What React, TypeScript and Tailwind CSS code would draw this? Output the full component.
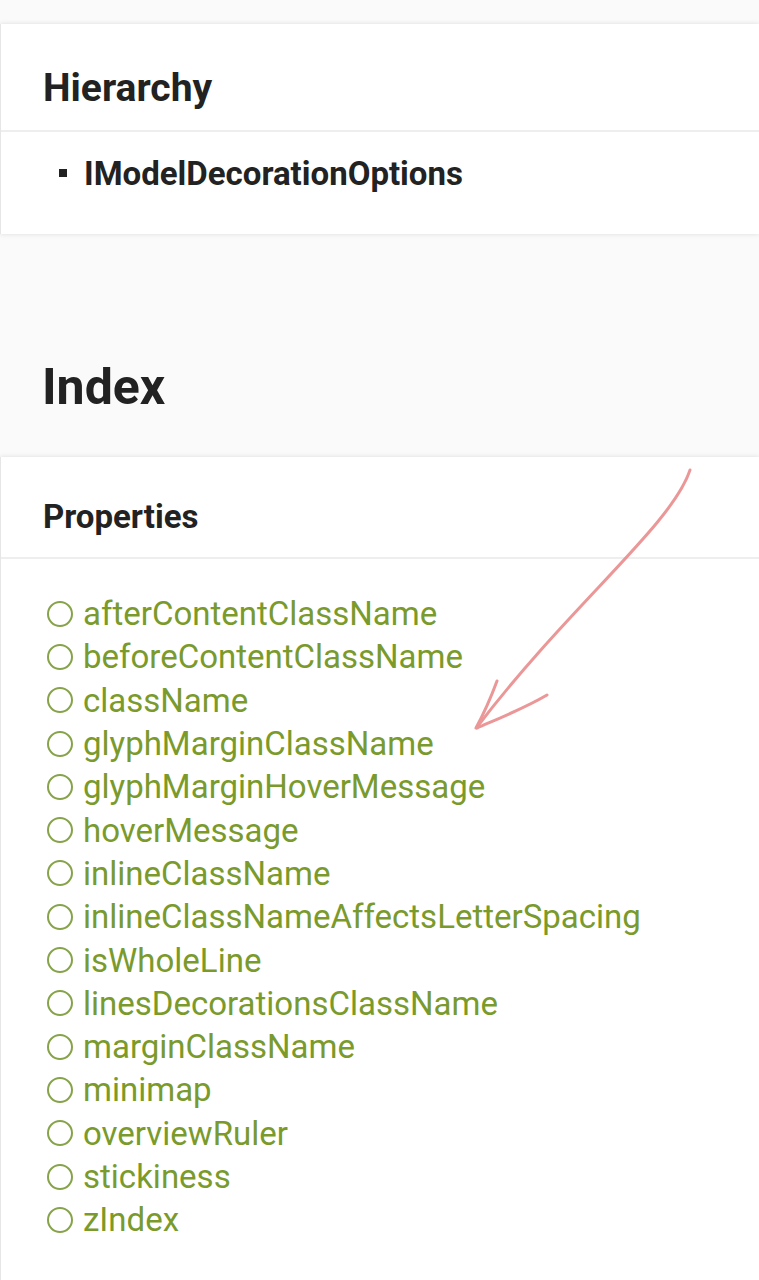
import React from "react";

const props = [
  "afterContentClassName",
  "beforeContentClassName",
  "className",
  "glyphMarginClassName",
  "glyphMarginHoverMessage",
  "hoverMessage",
  "inlineClassName",
  "inlineClassNameAffectsLetterSpacing",
  "isWholeLine",
  "linesDecorationsClassName",
  "marginClassName",
  "minimap",
  "overviewRuler",
  "stickiness",
  "zIndex",
];

export default function App() {
  return (
    <div
      className="relative min-h-[1280px] w-[759px] overflow-hidden bg-[#fafafa] pt-[24px] text-[#222]"
      style={{ fontFamily: "Roboto, 'Noto Sans', sans-serif" }}
    >
      <section className="border-l border-[#e6e6e6] bg-white shadow-[0_0_5px_rgba(0,0,0,0.12)]">
        <div className="flex h-[108px] items-center border-b-2 border-[#eeeeee] pl-[42px] pt-[22px]">
          <h2 className="text-[39px] font-bold leading-none">Hierarchy</h2>
        </div>
        <div className="flex h-[102px] items-center pb-[20px] pl-[58px]">
          <span className="mr-[17px] h-[8px] w-[8px] bg-[#222]" />
          <span className="text-[33px] font-bold leading-none">IModelDecorationOptions</span>
        </div>
      </section>

      <div className="flex h-[222px] items-end pb-[44px] pl-[42px]">
        <h2 className="text-[50px] font-bold leading-none">Index</h2>
      </div>

      <section className="mt-[1px] border-l border-[#e6e6e6] bg-white shadow-[0_0_5px_rgba(0,0,0,0.12)]">
        <div className="flex h-[102px] items-center border-b-2 border-[#eeeeee] pl-[42px] pt-[18px]">
          <h3 className="text-[33px] font-bold leading-none">Properties</h3>
        </div>
        <ul className="flex flex-col pb-[40px] pl-[46px] pt-[33px]">
          {props.map((p) => (
            <li key={p} className="flex h-[43.3px] items-center text-[33px] leading-none text-[#7a9a2c]">
              <span className="mr-[10px] h-[26px] w-[26px] rounded-full border-2 border-[#86a34a]" />
              <span>{p}</span>
            </li>
          ))}
        </ul>
      </section>

      <svg
        className="pointer-events-none absolute left-0 top-0"
        width="759"
        height="1280"
        viewBox="0 0 759 1280"
      >
        <g fill="none" stroke="#e88585" strokeWidth="3" strokeLinecap="round" strokeLinejoin="round" opacity="0.85">
          <path d="M690 470 C 672 525, 570 605, 477 727" />
          <path d="M497 681 C 490 700, 483 715, 476 728" />
          <path d="M547 695 C 525 708, 500 718, 477 728" />
        </g>
      </svg>
    </div>
  );
}
